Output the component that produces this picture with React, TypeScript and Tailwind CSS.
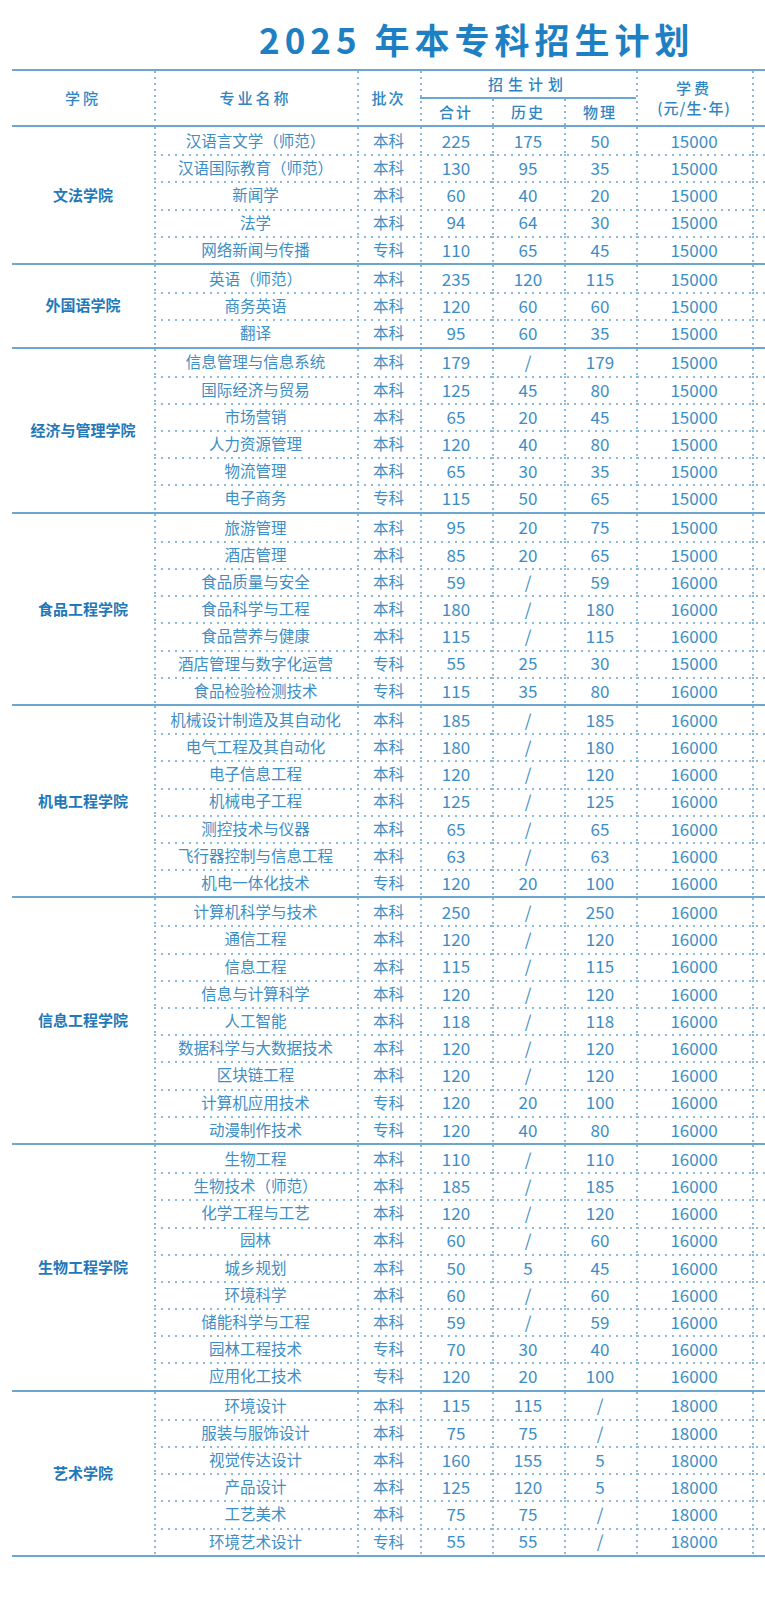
import React from "react";

interface Major {
  name: string;
  level: string;
  total: string;
  history: string;
  physics: string;
  fee: string;
}

interface College {
  name: string;
  majors: Major[];
}

const m = (
  name: string,
  level: string,
  total: string,
  history: string,
  physics: string,
  fee: string
): Major => ({ name, level, total, history, physics, fee });

const colleges: College[] = [
  {
    name: "文法学院",
    majors: [
      m("汉语言文学（师范）", "本科", "225", "175", "50", "15000"),
      m("汉语国际教育（师范）", "本科", "130", "95", "35", "15000"),
      m("新闻学", "本科", "60", "40", "20", "15000"),
      m("法学", "本科", "94", "64", "30", "15000"),
      m("网络新闻与传播", "专科", "110", "65", "45", "15000"),
    ],
  },
  {
    name: "外国语学院",
    majors: [
      m("英语（师范）", "本科", "235", "120", "115", "15000"),
      m("商务英语", "本科", "120", "60", "60", "15000"),
      m("翻译", "本科", "95", "60", "35", "15000"),
    ],
  },
  {
    name: "经济与管理学院",
    majors: [
      m("信息管理与信息系统", "本科", "179", "/", "179", "15000"),
      m("国际经济与贸易", "本科", "125", "45", "80", "15000"),
      m("市场营销", "本科", "65", "20", "45", "15000"),
      m("人力资源管理", "本科", "120", "40", "80", "15000"),
      m("物流管理", "本科", "65", "30", "35", "15000"),
      m("电子商务", "专科", "115", "50", "65", "15000"),
    ],
  },
  {
    name: "食品工程学院",
    majors: [
      m("旅游管理", "本科", "95", "20", "75", "15000"),
      m("酒店管理", "本科", "85", "20", "65", "15000"),
      m("食品质量与安全", "本科", "59", "/", "59", "16000"),
      m("食品科学与工程", "本科", "180", "/", "180", "16000"),
      m("食品营养与健康", "本科", "115", "/", "115", "16000"),
      m("酒店管理与数字化运营", "专科", "55", "25", "30", "15000"),
      m("食品检验检测技术", "专科", "115", "35", "80", "16000"),
    ],
  },
  {
    name: "机电工程学院",
    majors: [
      m("机械设计制造及其自动化", "本科", "185", "/", "185", "16000"),
      m("电气工程及其自动化", "本科", "180", "/", "180", "16000"),
      m("电子信息工程", "本科", "120", "/", "120", "16000"),
      m("机械电子工程", "本科", "125", "/", "125", "16000"),
      m("测控技术与仪器", "本科", "65", "/", "65", "16000"),
      m("飞行器控制与信息工程", "本科", "63", "/", "63", "16000"),
      m("机电一体化技术", "专科", "120", "20", "100", "16000"),
    ],
  },
  {
    name: "信息工程学院",
    majors: [
      m("计算机科学与技术", "本科", "250", "/", "250", "16000"),
      m("通信工程", "本科", "120", "/", "120", "16000"),
      m("信息工程", "本科", "115", "/", "115", "16000"),
      m("信息与计算科学", "本科", "120", "/", "120", "16000"),
      m("人工智能", "本科", "118", "/", "118", "16000"),
      m("数据科学与大数据技术", "本科", "120", "/", "120", "16000"),
      m("区块链工程", "本科", "120", "/", "120", "16000"),
      m("计算机应用技术", "专科", "120", "20", "100", "16000"),
      m("动漫制作技术", "专科", "120", "40", "80", "16000"),
    ],
  },
  {
    name: "生物工程学院",
    majors: [
      m("生物工程", "本科", "110", "/", "110", "16000"),
      m("生物技术（师范）", "本科", "185", "/", "185", "16000"),
      m("化学工程与工艺", "本科", "120", "/", "120", "16000"),
      m("园林", "本科", "60", "/", "60", "16000"),
      m("城乡规划", "本科", "50", "5", "45", "16000"),
      m("环境科学", "本科", "60", "/", "60", "16000"),
      m("储能科学与工程", "本科", "59", "/", "59", "16000"),
      m("园林工程技术", "专科", "70", "30", "40", "16000"),
      m("应用化工技术", "专科", "120", "20", "100", "16000"),
    ],
  },
  {
    name: "艺术学院",
    majors: [
      m("环境设计", "本科", "115", "115", "/", "18000"),
      m("服装与服饰设计", "本科", "75", "75", "/", "18000"),
      m("视觉传达设计", "本科", "160", "155", "5", "18000"),
      m("产品设计", "本科", "125", "120", "5", "18000"),
      m("工艺美术", "本科", "75", "75", "/", "18000"),
      m("环境艺术设计", "专科", "55", "55", "/", "18000"),
    ],
  },
];

// dotted rules drawn as backgrounds so the dot spacing matches the print
const vDots =
  "[background-image:repeating-linear-gradient(180deg,#8dbadb_0_2px,transparent_2px_6px)] [background-size:2px_100%] bg-no-repeat bg-left";
const hDots =
  "[background-image:repeating-linear-gradient(90deg,#8dbadb_0_2px,transparent_2px_7px)] [background-size:100%_2px] bg-no-repeat bg-top";

const cell = "flex items-center justify-center";
const txt = "text-[15.5px]";
const num = "text-[17px]";

const Row = ({ major, first }: { major: Major; first: boolean }) => (
  <div className={`flex h-[27.2px] ${first ? "" : hDots}`}>
    <div className={`${cell} ${vDots} w-[203px] ${txt}`}>{major.name}</div>
    <div className={`${cell} ${vDots} w-[63px] ${txt}`}>{major.level}</div>
    <div className={`${cell} ${vDots} w-[72px] ${num}`}>{major.total}</div>
    <div className={`${cell} ${vDots} w-[72px] ${num}`}>{major.history}</div>
    <div className={`${cell} ${vDots} w-[72px] ${num}`}>{major.physics}</div>
    <div className={`${cell} ${vDots} w-[116px] ${num}`}>{major.fee}</div>
    <div className={`${vDots} flex-1`} />
  </div>
);

export default function App() {
  return (
    <div className="w-[765px] min-h-[1623px] bg-white overflow-hidden font-['Noto_Sans_CJK_SC',sans-serif] text-[#3d8ec5]">
      {/* Title */}
      <div className="h-[69px] pt-[21px] pl-[259px]">
        <h1 className="text-[35px] leading-none font-bold tracking-[5px] text-[#1e80c3] whitespace-nowrap">
          2025 年本专科招生计划
        </h1>
      </div>

      <div className="pl-[12px]">
        {/* Header */}
        <div className="flex h-[58px] border-y-2 border-[#6ba7d1] text-[15px] font-medium text-[#2f86c2]">
          <div className={`${cell} w-[142px] tracking-[3px]`}>学院</div>
          <div className={`${cell} ${vDots} w-[203px] tracking-[3px]`}>专业名称</div>
          <div className={`${cell} ${vDots} w-[63px] tracking-[2px]`}>批次</div>
          <div className={`${vDots} w-[216px] flex flex-col`}>
            <div className={`${cell} h-[28px] border-b-2 border-[#6ba7d1] tracking-[5px]`}>
              招生计划
            </div>
            <div className="flex flex-1">
              <div className={`${cell} w-[72px] tracking-[2px]`}>合计</div>
              <div className={`${cell} ${vDots} w-[72px] tracking-[2px]`}>历史</div>
              <div className={`${cell} ${vDots} w-[72px] tracking-[2px]`}>物理</div>
            </div>
          </div>
          <div className={`${vDots} w-[116px] flex flex-col items-center justify-center leading-[20px]`}>
            <span className="tracking-[3px]">学费</span>
            <span className="tracking-[1px]">
              (元/生<span className="font-['Liberation_Sans',sans-serif] font-bold">·</span>年)
            </span>
          </div>
          <div className={`${vDots} flex-1`} />
        </div>

        {/* Body */}
        {colleges.map((college) => (
          <div key={college.name} className="flex border-b-2 border-[#6ba7d1]">
            <div className={`${cell} w-[142px] text-[15px] font-bold text-[#1f78b9]`}>
              {college.name}
            </div>
            <div className="flex-1 flex flex-col">
              {college.majors.map((major, i) => (
                <Row key={major.name} major={major} first={i === 0} />
              ))}
            </div>
          </div>
        ))}
      </div>
    </div>
  );
}
